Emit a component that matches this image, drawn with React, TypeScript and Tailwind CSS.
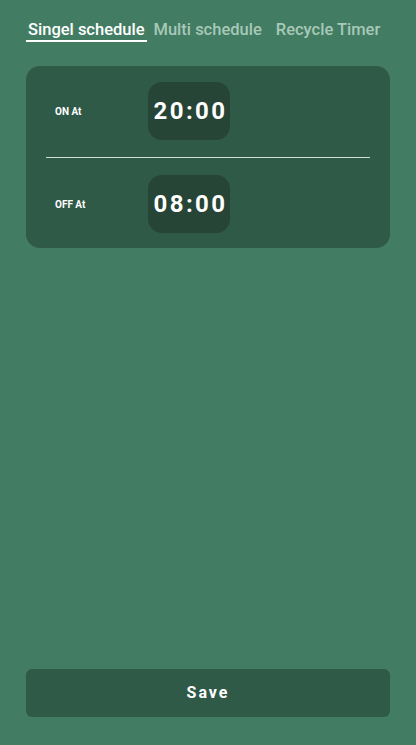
const tabs = [
  { label: "Singel schedule", active: true },
  { label: "Multi schedule", active: false },
  { label: "Recycle Timer", active: false },
];

function TimeRow({ label, time }: { label: string; time: string }) {
  return (
    <div className="flex items-center">
      <div className="w-[122px] pl-[29px] text-[10px] font-bold text-white">{label}</div>
      <div className="flex h-[58px] w-[82px] items-center justify-center rounded-[14px] bg-[#264536] pl-[3px] text-[24px] font-bold tracking-[2.4px] text-white">
        {time}
      </div>
    </div>
  );
}

export default function App() {
  return (
    <div
      className="flex h-[745px] w-[416px] flex-col bg-[#427d63] px-[26px]"
      style={{ fontFamily: "Roboto, 'Noto Sans', sans-serif" }}
    >
      <div className="mt-[20px] flex items-start">
        {tabs.map((tab, i) => (
          <div
            key={tab.label}
            className={`px-[2px] text-[16.5px] leading-[20px] font-medium ${
              tab.active ? "border-b-2 border-white text-white" : "text-[#a8c8b8]"
            } ${i === 1 ? "ml-[5px]" : ""} ${i === 2 ? "ml-[10px]" : ""}`}
          >
            {tab.label}
          </div>
        ))}
      </div>

      <div className="mt-[24px] rounded-[14px] bg-[#305a48] pt-[16px] pb-[15px]">
        <TimeRow label="ON At" time="20:00" />
        <div className="mx-[20px] my-[17px] h-px bg-[#d0e0d6]" />
        <TimeRow label="OFF At" time="08:00" />
      </div>

      <div className="flex-1" />

      <button className="mb-[28px] h-[48px] w-full rounded-[6px] bg-[#305a48] text-[16px] font-bold tracking-[2px] text-white">
        Save
      </button>
    </div>
  );
}
